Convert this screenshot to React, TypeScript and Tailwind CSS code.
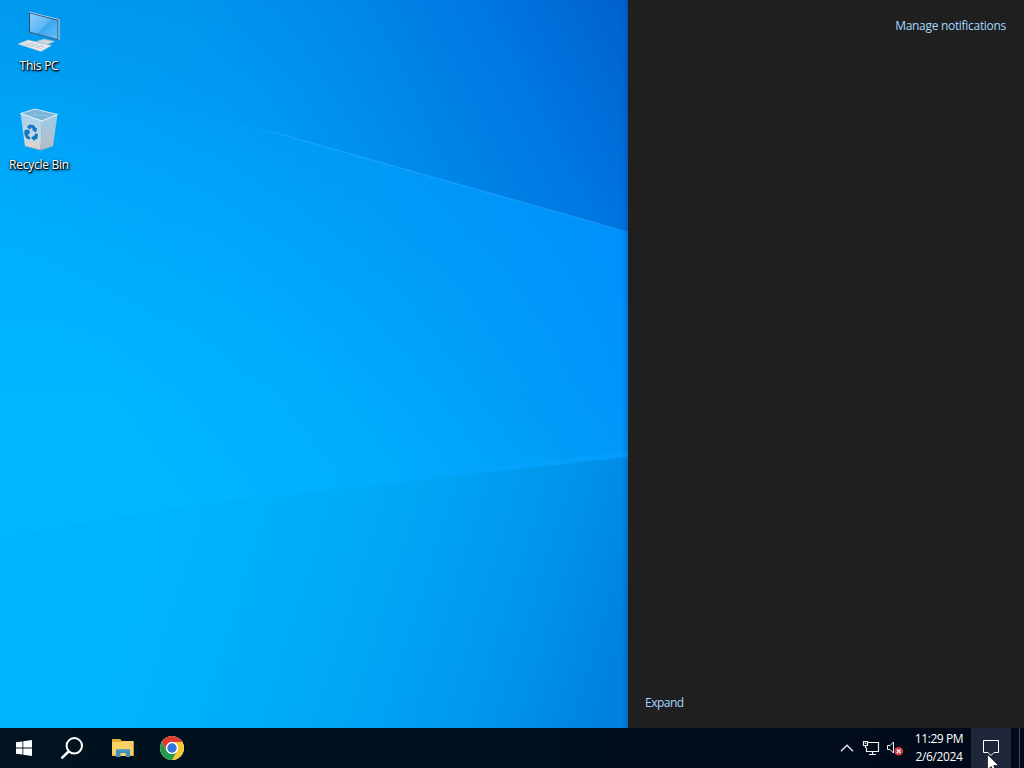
import type { ReactNode } from "react";

function Wallpaper() {
  return (
    <svg className="absolute inset-0 h-full w-full" viewBox="0 0 628 728" preserveAspectRatio="none" aria-hidden="true">
      <defs>
        <linearGradient id="beam" x1="180" y1="490" x2="590" y2="190" gradientUnits="userSpaceOnUse">
          <stop offset="0" stopColor="#00b6ff" />
          <stop offset="0.35" stopColor="#00acfd" />
          <stop offset="0.65" stopColor="#009df8" />
          <stop offset="1" stopColor="#008bfd" />
        </linearGradient>
        <linearGradient id="topShade" x1="0" y1="0" x2="0" y2="400" gradientUnits="userSpaceOnUse">
          <stop offset="0" stopColor="#008fe6" stopOpacity="0.7" />
          <stop offset="0.4" stopColor="#0098f4" stopOpacity="0.45" />
          <stop offset="1" stopColor="#00a4ff" stopOpacity="0" />
        </linearGradient>
        <linearGradient id="sky" x1="270" y1="190" x2="628" y2="0" gradientUnits="userSpaceOnUse">
          <stop offset="0" stopColor="#0098f1" />
          <stop offset="0.3" stopColor="#008aea" />
          <stop offset="0.65" stopColor="#0079e2" />
          <stop offset="1" stopColor="#0060cf" />
        </linearGradient>
        <linearGradient id="skyFade" x1="60" y1="140" x2="400" y2="20" gradientUnits="userSpaceOnUse">
          <stop offset="0" stopColor="#fff" stopOpacity="0" />
          <stop offset="0.4" stopColor="#fff" stopOpacity="0.35" />
          <stop offset="1" stopColor="#fff" />
        </linearGradient>
        <mask id="skyMask" maskUnits="userSpaceOnUse" x="0" y="0" width="628" height="728">
          <path d="M0 0H628V232L265 129L0 62Z" fill="url(#skyFade)" />
        </mask>
        <linearGradient id="floor" x1="180" y1="500" x2="628" y2="640" gradientUnits="userSpaceOnUse">
          <stop offset="0" stopColor="#00b4fc" />
          <stop offset="0.35" stopColor="#00abf7" />
          <stop offset="0.6" stopColor="#009ff1" />
          <stop offset="0.82" stopColor="#0091e9" />
          <stop offset="1" stopColor="#0080df" />
        </linearGradient>
        <linearGradient id="rayLine" x1="255" y1="0" x2="628" y2="0" gradientUnits="userSpaceOnUse">
          <stop offset="0" stopColor="#30b2ff" stopOpacity="0" />
          <stop offset="0.08" stopColor="#30b2ff" stopOpacity="0.5" />
          <stop offset="0.5" stopColor="#2ca8ff" stopOpacity="0.5" />
          <stop offset="0.9" stopColor="#2ca8ff" stopOpacity="0.6" />
          <stop offset="1" stopColor="#2ca8ff" stopOpacity="0.2" />
        </linearGradient>
        <linearGradient id="lowLine" x1="300" y1="0" x2="628" y2="0" gradientUnits="userSpaceOnUse">
          <stop offset="0" stopColor="#08a8ff" stopOpacity="0" />
          <stop offset="1" stopColor="#08a0ff" stopOpacity="0.6" />
        </linearGradient>
        <linearGradient id="edge" x1="0" y1="0" x2="1" y2="0">
          <stop offset="0" stopColor="#003a90" stopOpacity="0" />
          <stop offset="1" stopColor="#003a90" stopOpacity="0.3" />
        </linearGradient>
      </defs>
      <rect width="628" height="728" fill="url(#beam)" />
      <rect width="628" height="400" fill="url(#topShade)" />
      <rect width="628" height="728" fill="url(#sky)" mask="url(#skyMask)" />
      <path d="M0 538L200 504L628 457V728H0Z" fill="url(#floor)" />
      <path d="M255 127L628 232" stroke="url(#rayLine)" strokeWidth="1.200" />
      <path d="M300 491L628 454" stroke="url(#lowLine)" strokeWidth="5" />
      <rect x="622" width="6" height="728" fill="url(#edge)" />
    </svg>
  );
}

function PcIcon() {
  return (
    <svg className="h-12 w-12" viewBox="0 0 48 48" aria-hidden="true">
      <defs>
        <linearGradient id="screen" x1="0" y1="0" x2="1" y2="1">
          <stop offset="0" stopColor="#8fd0fb" />
          <stop offset="0.5" stopColor="#5ab6f5" />
          <stop offset="0.52" stopColor="#3ea6ee" />
          <stop offset="1" stopColor="#62bffa" />
        </linearGradient>
      </defs>
      <path d="M21 32.500l8-2.500 11 2.500-8 3z" fill="#cdd8df" stroke="#a3b2bc" strokeWidth=".5" />
      <path d="M14 3l30.500 7.500v21L14 23.500z" fill="#d7e0e6" />
      <path d="M14 3l29.500 7.500v21L14 23.500z" fill="#25506f" />
      <path d="M15 4.500l27.500 7v18.700L15 22.800z" fill="url(#screen)" />
      <path d="M14 3l30 7.500" stroke="#c5e3f3" strokeWidth=".7" />
      <path d="M3 35l10-4 23.500 5.500L26 42.500z" fill="#e6ebee" stroke="#b3bec6" strokeWidth=".5" />
      <path d="M7 34.600l20 5.200M10 33.300l20 5M11 36.500l7-3M16 37.800l7-3M21 39l7-3" stroke="#aab8c1" strokeWidth=".5" />
    </svg>
  );
}

function BinIcon() {
  return (
    <svg className="-mt-0.5 mb-0.5 h-12 w-12" viewBox="0 0 48 48" aria-hidden="true">
      <defs>
        <linearGradient id="binFront" x1="0" y1="0" x2="0" y2="1">
          <stop offset="0" stopColor="#a5d0eb" />
          <stop offset="0.7" stopColor="#cad9e3" />
          <stop offset="0.85" stopColor="#d8d4d1" />
          <stop offset="1" stopColor="#d9d3cf" />
        </linearGradient>
        <linearGradient id="binSide" x1="0" y1="0" x2="0" y2="1">
          <stop offset="0" stopColor="#9ccbe6" />
          <stop offset="1" stopColor="#b6bec5" />
        </linearGradient>
      </defs>
      <path d="M5.500 7.500L20 3 42.500 8.500 27 15z" fill="#79b4d7" stroke="#d8eaf4" strokeWidth="1" />
      <path d="M20 4v5L8 9M20 9l18 1" fill="none" stroke="#9ccae4" strokeWidth=".7" />
      <path d="M5.500 7.500L27 15l-1.500 29L10 40z" fill="url(#binFront)" />
      <path d="M27 15l15.500-6.500L38 40l-12.500 4z" fill="url(#binSide)" />
      <path d="M5.500 7.500L27 15l15.500-6.500" fill="none" stroke="#e4eff5" strokeWidth="1" />
      <path d="M10 40l15.500 4L38 40" fill="none" stroke="#b0aca9" strokeWidth=".6" />
      <g fill="#1477c1">
        <path d="M11.800 21l2.700-2.500 4.500.8 2 3 1.300-.3-1.200 4.300-4.300-2.300 1.400-.5-1.600-2-1.800 2z" />
        <path d="M9.500 24l4.300-.4 1.600 4.200-1.500-.6-.7 2.400 2.300 2.100-1 2-3.200-1.500-2-3.700z" />
        <path d="M20 27.300l3 .7-.7 5-3 1v1.600l-3.100-4 3.500-2.700v1.800z" />
      </g>
    </svg>
  );
}

function DesktopItem({ label, children }: { label: string; children: ReactNode }) {
  return (
    <div className="flex h-[99px] w-[78px] flex-col items-center">
      {children}
      <span className="mt-[1px] text-[12px] leading-4 tracking-[-0.25px] whitespace-nowrap text-white [text-shadow:1px_1px_1px_#000,0_1px_2px_#000,1px_1px_3px_#000a]">{label}</span>
    </div>
  );
}

function ChromeIcon() {
  return (
    <svg className="h-6 w-6" viewBox="0 0 24 24" aria-hidden="true">
      <circle cx="12" cy="12" r="12" fill="#fff" />
      <path d="M12 6H22.390A12 12 0 0 0 1.610 6L6.800 15A6 6 0 0 1 12 6Z" fill="#e0392d" />
      <path d="M17.200 15L12 24A12 12 0 0 0 22.390 6H12A6 6 0 0 1 17.200 15Z" fill="#f8c934" />
      <path d="M6.800 15L1.610 6A12 12 0 0 0 12 24L17.200 15A6 6 0 0 1 6.800 15Z" fill="#269a48" />
      <circle cx="12" cy="12" r="5.900" fill="#fff" />
      <circle cx="12" cy="12" r="4.700" fill="#3475df" />
    </svg>
  );
}

function Taskbar() {
  return (
    <footer className="flex h-10 items-center bg-[#00101d] bg-linear-to-r from-[#00131e] via-[#00101d] to-[#020919] text-white">
      <div className="flex h-10 w-12 items-center justify-center">
        <svg className="h-4 w-4" viewBox="0 0 16 16" fill="#fff" aria-hidden="true">
          <path d="M0 2.300l6.500-.9v6.100H0zM7.300 1.300L16 0v7.500H7.300zM0 8.400h6.500v6.200L0 13.700zM7.300 8.400H16V16l-8.700-1.200z" />
        </svg>
      </div>
      <div className="flex h-10 w-12 items-center justify-center">
        <svg className="h-6 w-6" viewBox="0 0 24 24" fill="none" stroke="#fff" strokeWidth="2" aria-hidden="true">
          <circle cx="14.300" cy="9.800" r="7.700" />
          <path d="M8.600 15.500L1.500 22.300" strokeWidth="2.500" />
        </svg>
      </div>
      <div className="flex h-10 w-[54px] items-center justify-center">
        <svg className="h-6 w-6" viewBox="0 0 24 24" aria-hidden="true">
          <path d="M1 3h8l2 2h11.500v14H1z" fill="#e5a935" />
          <path d="M1 6h9l1.500-1h11v15H1z" fill="#f8d063" />
          <path d="M5 13h14v8h-4v-4H9.500v4H5z" fill="#3e91bf" />
          <path d="M5 13h14v1.500H5z" fill="#5aa5c4" />
          <path d="M1 18.500h4V20H1zM19 18.500h3.500V20H19z" fill="#e7b950" />
        </svg>
      </div>
      <div className="-ml-0.5 flex h-10 w-12 items-center justify-center">
        <ChromeIcon />
      </div>

      <div className="ml-auto flex h-10 items-center">
        <svg className="mr-[7px] h-4 w-4" viewBox="0 0 16 16" fill="none" stroke="#e5e8ed" strokeWidth="1.400" aria-hidden="true">
          <path d="M2 11.300l6-6 6 6" />
        </svg>
        <svg className="mr-1.5 h-[18px] w-[18px]" viewBox="0 0 18 18" fill="none" stroke="#f2f3f5" strokeWidth="1.200" aria-hidden="true">
          <path d="M6 3.500h10.500v9H4.500V9M10.500 12.500v3M7 15.500h7" />
          <path d="M1.500 2.500h4v4h-4zM3.500 6.500v2h1M3.500 3.500v1.500" />
        </svg>
        <svg className="mr-[11px] h-[18px] w-[18px]" viewBox="0 0 18 18" fill="none" aria-hidden="true">
          <path d="M1.500 6.500H4L7.500 3v11L4 10.500H1.500z" stroke="#f2f3f5" />
          <circle cx="12.700" cy="12.300" r="4.300" fill="#d13c46" />
          <path d="M10.900 10.500l3.600 3.600M14.500 10.500l-3.600 3.600" stroke="#fff" strokeWidth="1.100" />
        </svg>
        <div className="mr-2 flex w-12 flex-col items-center text-[12px] leading-[18px] tracking-[-0.4px] whitespace-nowrap">
          <span>11:29 PM</span>
          <span>2/6/2024</span>
        </div>
        <div className="flex h-10 w-10 items-center justify-center bg-[#20273a]">
          <svg className="h-5 w-5" viewBox="0 0 20 20" fill="none" stroke="#fff" aria-hidden="true">
            <path d="M2.500 2.500h15v12H13l-3 3-3-3H2.500z" />
          </svg>
        </div>
        <div className="ml-2 h-10 w-px bg-[#454b58]" />
        <div className="w-1" />
      </div>
    </footer>
  );
}

export default function App() {
  return (
    <div className="relative flex h-[768px] w-[1024px] flex-col overflow-hidden bg-black font-['Open_Sans',sans-serif]">
      <div className="flex min-h-0 flex-1">
        <main className="relative w-[628px] overflow-hidden">
          <Wallpaper />
          <div className="relative flex flex-col pt-[9px]">
            <DesktopItem label="This PC">
              <PcIcon />
            </DesktopItem>
            <DesktopItem label="Recycle Bin">
              <BinIcon />
            </DesktopItem>
          </div>
        </main>
        <aside className="flex flex-1 flex-col justify-between bg-[#1f1f1f] text-[12px] leading-4 text-[#a6d8ff]">
          <button className="mt-[18px] mr-[18px] self-end tracking-[-0.3px]">Manage notifications</button>
          <button className="mb-[17px] ml-[17px] self-start tracking-[-0.5px]">Expand</button>
        </aside>
      </div>
      <Taskbar />
      <svg className="absolute top-[754px] left-[987px] h-[19px] w-3" viewBox="0 0 12 19" aria-hidden="true">
        <path d="M.5.500v15.500l3.700-3.500 2.300 5.500 2.500-1-2.300-5.400h5z" fill="#fff" stroke="#111" strokeWidth=".7" />
      </svg>
    </div>
  );
}
